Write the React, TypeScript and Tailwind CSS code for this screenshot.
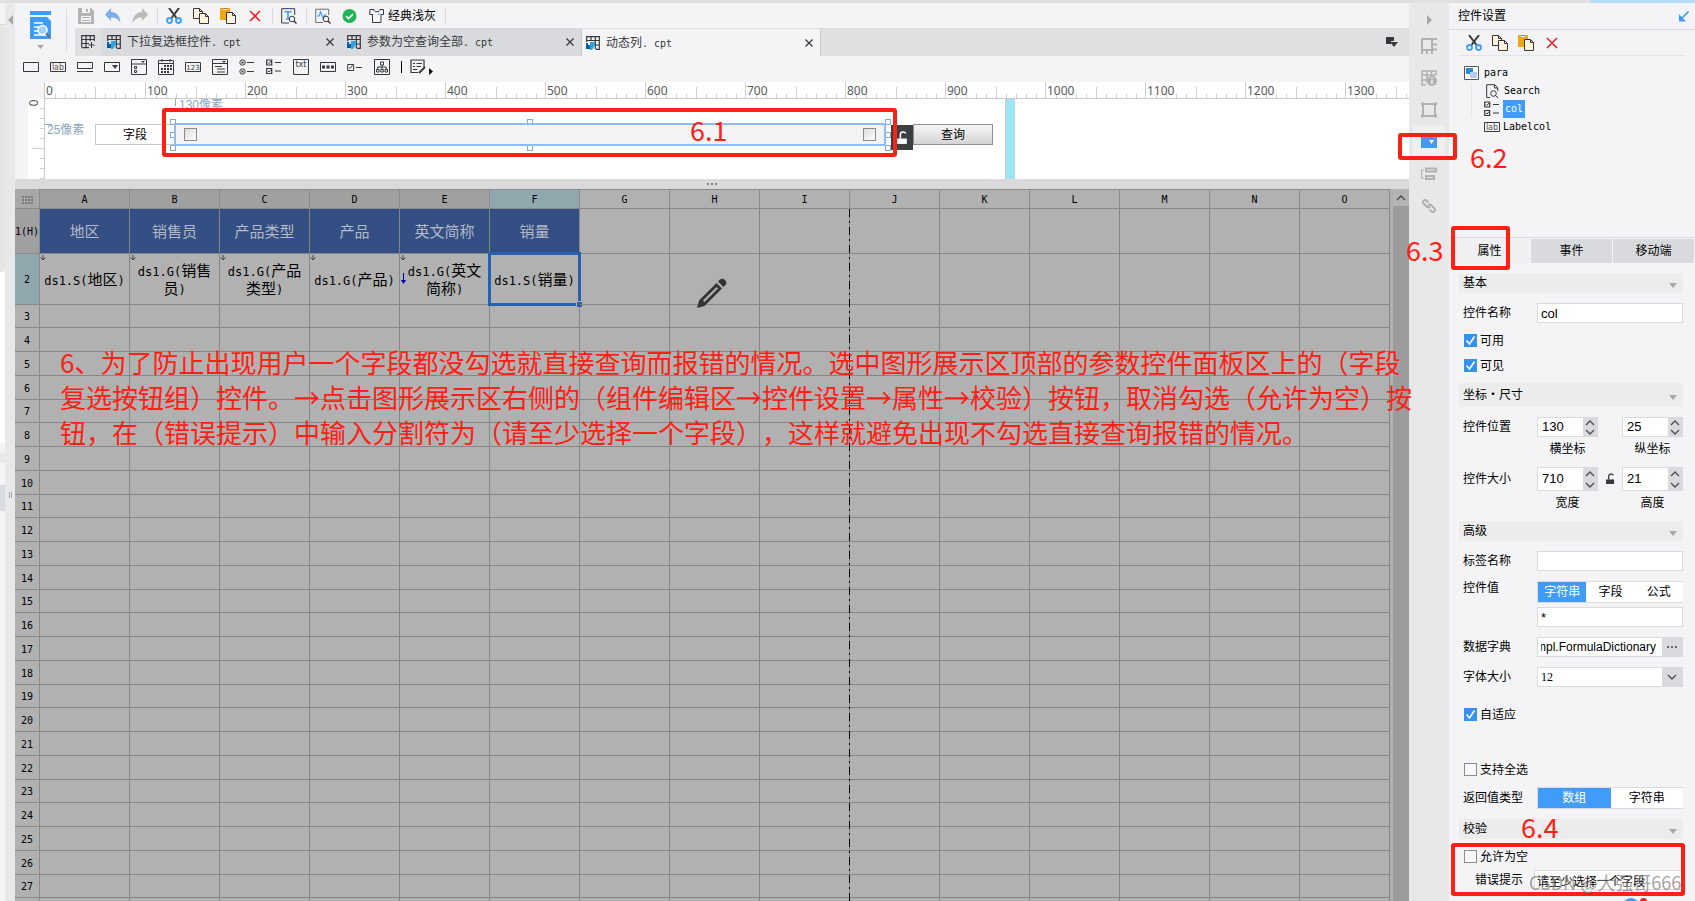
import { ReactNode, useState } from "react";
import { clsx } from "clsx";

type IconProps = {
  children: ReactNode;
  className?: string;
  box?: string;
};

const Icon = ({ children, className = "size-4", box = "0 0 16 16" }: IconProps) => (
  <svg viewBox={box} className={clsx("shrink-0", className)} fill="none" aria-hidden="true">
    {children}
  </svg>
);

const INK = "#36383b";

/* ---------- toolbar icons ---------- */

const SaveIcon = () => (
  <Icon>
    <path d="M0 0h13l3 3v13H0z" fill="#b3b4b6" />
    <path d="M4 0h8v5H4zM3 8h10v6H3z" fill="#f4f4f6" />
    <path d="M8 1h2v3H8zM4 9h8v1H4zM4 12h8v1H4z" fill="#b3b4b6" />
  </Icon>
);

const UndoIcon = () => (
  <Icon>
    <path d="M0 6.500 6 0v4c6 0 9 4 9.500 11C13 11 11 9.500 6 9.500V13z" fill="#79b0ea" />
  </Icon>
);

const RedoIcon = () => (
  <Icon>
    <path d="M16 6.500 10 0v4C4 4 1 8 .5 15 3 11 5 9.500 10 9.500V13z" fill="#b9babc" />
  </Icon>
);

const CutIcon = () => (
  <Icon>
    <path d="m3 0 7.500 10M13 0 5.500 10" stroke={INK} strokeWidth="2" />
    <circle cx="3.500" cy="12.500" r="2.500" stroke="#409cf8" strokeWidth="1.800" />
    <circle cx="12.500" cy="12.500" r="2.500" stroke="#409cf8" strokeWidth="1.800" />
  </Icon>
);

const CopyIcon = () => (
  <Icon>
    <path d="M.5.5h6l3 3v7h-9z" fill="#fff3dd" stroke={INK} />
    <path d="M6.500.5v3h3" stroke={INK} />
    <path d="M6.500 5.500h6l3 3v7h-9z" fill="#fff3dd" stroke={INK} />
    <path d="M12.500 5.500v3h3" stroke={INK} />
  </Icon>
);

const PasteIcon = () => (
  <Icon>
    <path d="M0 0h3v2h4V0h3v4H6v8H0z" fill="#f0a812" />
    <path d="M3 0h4" stroke="#9b4b2a" strokeWidth="1.500" />
    <path d="M6.500 4.500h6l3 3v8h-9z" fill="#fff3dd" stroke={INK} />
    <path d="M12.500 4.500v3h3" stroke={INK} />
  </Icon>
);

const DeleteIcon = () => (
  <Icon>
    <path d="m3 3 10 10M13 3 3 13" stroke="#e8222a" strokeWidth="1.600" />
  </Icon>
);

const FindTextIcon = () => (
  <Icon>
    <path d="M8 15H.7V.7h13V7" stroke={INK} />
    <path d="M3.500 3.800h7M7 3.800V11M5 11h4" stroke="#409cf8" strokeWidth="1.600" />
    <circle cx="11" cy="11" r="2.800" stroke={INK} />
    <path d="m13 13 2.500 2.500" stroke={INK} strokeWidth="1.500" />
  </Icon>
);

const FindWaveIcon = () => (
  <Icon>
    <path d="M8 14.500H.7V1.200h13V7" stroke="#6b6e72" />
    <path d="M2 8h2l1.500-4L8 10l1.500-3H12" stroke="#409cf8" strokeWidth="1.200" />
    <circle cx="11" cy="11" r="2.800" stroke={INK} />
    <path d="m13 13 2.500 2.500" stroke={INK} strokeWidth="1.500" />
  </Icon>
);

const OkIcon = () => (
  <Icon>
    <circle cx="7.500" cy="8" r="7" fill="#1fb455" />
    <path d="m4 8 2.500 2.500L11 6" stroke="#fff" strokeWidth="1.700" />
  </Icon>
);

const ShirtIcon = () => (
  <Icon>
    <path d="M5 1.500 1 1.500.7 6.500h2.800v8h8.500v-8h2.500L14.500 1.500H11c0 3-6 3-6 0z" stroke={INK} />
    <path d="M9 6h2" stroke="#409cf8" />
  </Icon>
);

/* ---------- widget icons ---------- */

const CheckRow = ({ y }: { y: number }) => (
  <>
    <path d={`M.7 ${y}h5v5h-5zM9 ${y + 2.5}h6`} stroke={INK} strokeWidth="1.200" />
    <path d={`m2 ${y + 2.5} 1 1 2-2.500`} stroke={INK} />
  </>
);

const CheckGroupIcon = () => (
  <Icon>
    <CheckRow y={1} />
    <CheckRow y={9.5} />
  </Icon>
);

const LabelIcon = () => (
  <Icon>
    <path d="M.5 3.500h15v9H.5z" stroke={INK} />
    <text x="8" y="11" textAnchor="middle" fontSize="8" fontFamily="DejaVu Sans" fill="#555">
      lab
    </text>
  </Icon>
);

const widgetIcons: { name: string; icon: ReactNode }[] = [
  { name: "文本", icon: <Icon><path d="M.5 3.500h15v9H.5z" stroke={INK} /></Icon> },
  { name: "标签", icon: <LabelIcon /> },
  {
    name: "按钮",
    icon: <Icon><path d="M.5 3.500h15v6H.5zM0 12.500h16" stroke={INK} /></Icon>,
  },
  {
    name: "下拉框",
    icon: (
      <Icon>
        <path d="M.5 3.500h15v9H.5z" stroke={INK} />
        <path d="M8 6h6l-3 4z" fill={INK} />
      </Icon>
    ),
  },
  {
    name: "下拉复选框",
    icon: (
      <Icon>
        <path d="M.5.5h15v15H.5zM.5 5h15M3.500 7.500h2v2h-2zM3.500 11.500h2v2h-2z" stroke={INK} />
        <path d="M10 2h4l-2 2z" fill={INK} />
      </Icon>
    ),
  },
  {
    name: "日期",
    icon: (
      <Icon>
        <path d="M.5 1.500h15v14H.5zM.5 4.500h15M4 0v3M12 0v3" stroke={INK} />
        <path d="M6 7h8M3 10h11M3 13h8" stroke={INK} strokeWidth="2" strokeDasharray="2 1" />
      </Icon>
    ),
  },
  {
    name: "数字",
    icon: (
      <Icon>
        <path d="M.5 3.500h15v9H.5z" stroke={INK} />
        <text x="8" y="11" textAnchor="middle" fontSize="7" fontFamily="DejaVu Sans" fill={INK}>
          123
        </text>
      </Icon>
    ),
  },
  {
    name: "下拉树",
    icon: (
      <Icon>
        <path d="M.5.5h15v15H.5zM.5 4.500h15M3 7.500h7M5 10h8M5 13h8" stroke={INK} />
        <path d="M10 2h4l-2 2z" fill={INK} />
      </Icon>
    ),
  },
  {
    name: "单选按钮组",
    icon: (
      <Icon>
        <circle cx="3.500" cy="3.500" r="2.700" stroke={INK} />
        <circle cx="3.500" cy="12.500" r="2.700" stroke={INK} />
        <path d="M2.500 3.500h2M2.500 12.500h2" stroke={INK} strokeWidth="2" />
        <path d="M8 3.500h7M8 12.500h7" stroke={INK} />
      </Icon>
    ),
  },
  { name: "复选按钮组", icon: <CheckGroupIcon /> },
  {
    name: "文本域",
    icon: (
      <Icon>
        <path d="M.5.5h15v15H.5z" stroke={INK} />
        <text x="8" y="8" textAnchor="middle" fontSize="8" fontFamily="DejaVu Sans" fill={INK}>
          txt
        </text>
      </Icon>
    ),
  },
  {
    name: "密码",
    icon: (
      <Icon>
        <path d="M.5 3.500h15v9H.5z" stroke={INK} />
        <path d="M2 8h12" stroke={INK} strokeWidth="3" strokeDasharray="3 1.500" />
      </Icon>
    ),
  },
  {
    name: "复选框",
    icon: (
      <Icon>
        <path d="M.7 5.500h6v6h-6zM9 8.500h6" stroke={INK} />
        <path d="m2 8.500 1 1 2.500-3" stroke={INK} />
      </Icon>
    ),
  },
  {
    name: "树",
    icon: (
      <Icon>
        <path
          d="M.5.5h15v15H.5zM6.500 3h3v3h-3zM2.500 10.500h2.500v2.500H2.500zM6.800 10.500h2.500v2.500H6.800zM11 10.500h2.500v2.500H11zM8 6v4M3.700 10V8h8.500v2"
          stroke={INK}
        />
      </Icon>
    ),
  },
];

const TabFileIcon = () => (
  <Icon className="size-[14px]" box="0 0 14 14">
    <path d="M.7 6V.7h12.600v12.600H10M.7 4.500h12.600M5 .7v4M9.300.7v12.600M9.300 9h4" stroke={INK} strokeWidth="1.200" />
    <path d="M0 7h2v2h2v4H0z" fill="#0b5ba5" />
    <path d="M4 6h5v3l-3 5H4z" fill="#2fa3dd" />
  </Icon>
);

const LockIcon = ({ className, color }: { className: string; color: string }) => (
  <Icon className={className} box="0 0 10 13">
    <path d="M3 7V3.500C3 .3 7.500.3 8 2.500" stroke={color} strokeWidth="1.400" />
    <path d="M0 7h9v5H0z" fill={color} />
  </Icon>
);

const Chevron = ({ up }: { up?: boolean }) => (
  <Icon className="h-[6px] w-[10px]" box="0 0 10 6">
    <path d={up ? "m1 5 4-4 4 4" : "m1 1 4 4 4-4"} stroke="#4b4d50" strokeWidth="1.300" />
  </Icon>
);

const ToolButton = ({ label, children }: { label: string; children: ReactNode }) => (
  <button type="button" aria-label={label} className="flex size-4 shrink-0 items-center justify-center">
    {children}
  </button>
);

const Divider = () => <span className="mr-2 ml-[9px] h-4 w-px bg-[#d9dadd]" />;

/* ---------- header ---------- */

const TopToolbar = () => (
  <div className="flex h-[25px] items-center pl-[3px]">
    <div className="flex gap-[11px]">
      <ToolButton label="保存"><SaveIcon /></ToolButton>
      <ToolButton label="撤销"><UndoIcon /></ToolButton>
      <ToolButton label="重做"><RedoIcon /></ToolButton>
    </div>
    <Divider />
    <div className="flex gap-[11px]">
      <ToolButton label="剪切"><CutIcon /></ToolButton>
      <ToolButton label="复制"><CopyIcon /></ToolButton>
      <ToolButton label="粘贴"><PasteIcon /></ToolButton>
      <ToolButton label="删除"><DeleteIcon /></ToolButton>
    </div>
    <Divider />
    <ToolButton label="查找"><FindTextIcon /></ToolButton>
    <Divider />
    <div className="flex gap-[11px]">
      <ToolButton label="检测"><FindWaveIcon /></ToolButton>
      <ToolButton label="校验"><OkIcon /></ToolButton>
      <button type="button" className="flex items-center gap-[3px] whitespace-nowrap">
        <ShirtIcon />
        经典浅灰
      </button>
    </div>
    <Divider />
  </div>
);

const files = ["下拉复选框控件", "参数为空查询全部", "动态列"];

const FileTabs = () => {
  const [active, setActive] = useState(2);

  return (
    <div className="flex h-7 bg-[#e0e0e2]">
      <button type="button" aria-label="新建" className="flex w-[26px] items-center justify-center">
        <Icon className="size-[14px]" box="0 0 14 14">
          <path d="M.7 12V.7h12.600V6M.7 4.500h12.600M5 .7v12.600M9.300.7V6M.7 8.500H8M.7 12.600H8" stroke={INK} strokeWidth="1.200" />
          <path d="M7.500 10h6M10.500 7v6" stroke={INK} />
        </Icon>
      </button>
      {files.map((file, index) => (
        <div
          key={file}
          className={clsx(
            "flex w-[240px] items-center pr-[7px]",
            index === active
              ? "border-x border-t border-[#c9cacd] border-t-[#dcdcde] bg-[#f4f4f6] pl-1"
              : "bg-[#d9dade] pl-[6px]"
          )}
        >
          <button
            type="button"
            onClick={() => setActive(index)}
            className="flex flex-1 items-center gap-[6px] whitespace-nowrap text-[#36383b]"
          >
            <TabFileIcon />
            <span>
              {file}
              <span className="font-['DejaVu_Sans_Mono',monospace] text-[10px]">. cpt</span>
            </span>
          </button>
          <button type="button" aria-label="关闭">
            <Icon className="size-2" box="0 0 8 8">
              <path d="m.5.5 7 7M7.500.5l-7 7" stroke={INK} strokeWidth="1.300" />
            </Icon>
          </button>
        </div>
      ))}
      <button type="button" aria-label="更多" className="mr-[11px] ml-auto">
        <Icon className="h-[11px] w-3" box="0 0 12 11">
          <path d="M0 0h8v4H5v3H0z" fill={INK} />
          <path d="M4 5h8l-4 5z" fill={INK} />
        </Icon>
      </button>
    </div>
  );
};

const WidgetBar = () => (
  <div className="flex h-[26px] items-center gap-[11px] pb-[5px] pl-2">
    {widgetIcons.map(({ name, icon }) => (
      <ToolButton key={name} label={name}>{icon}</ToolButton>
    ))}
    <div className="flex items-center gap-2">
      <span className="h-3 w-px bg-black" />
      <button type="button" aria-label="更多控件" className="flex items-end gap-[3px]">
        <Icon>
          <path d="M8 13.500H1V1h13v7M3 4.500h2M6.500 4.500H12M3 7.500h2M6.500 7.500H11M3 10.500h4" stroke={INK} strokeWidth="1.200" />
          <path d="m9 14 6-6" stroke={INK} strokeWidth="2" />
        </Icon>
        <Icon className="h-[7px] w-1" box="0 0 4 7">
          <path d="m0 0 4 3.500L0 7z" fill="#111" />
        </Icon>
      </button>
    </div>
  </div>
);

/* ---------- parameter pane ---------- */

const Ruler = () => (
  <div className="ml-[29px] flex h-[17px] overflow-hidden border-b border-[#c8c9cc] border-l bg-white">
    {Array.from({ length: 14 }, (_, seg) => (
      <div
        key={seg}
        className={clsx("relative flex w-[100px] shrink-0 items-end", seg > 0 && "border-l border-[#cfd0d3]")}
      >
        <span className="absolute top-px left-px font-['Noto_Sans',sans-serif] text-xs leading-[15px] text-[#58595b]">
          {seg * 100}
        </span>
        {Array.from({ length: 10 }, (_, i) => (
          <span
            key={i}
            className={clsx(
              "w-[10px] shrink-0 border-[#cfd0d3]",
              i > 0 && "border-l",
              i === 5 ? "h-[11px]" : "h-1"
            )}
          />
        ))}
      </div>
    ))}
  </div>
);

const handles = [
  "left-[125px] top-5",
  "left-[125px] top-[33px]",
  "left-[125px] top-[46px]",
  "left-[482px] top-5",
  "left-[482px] top-[46px]",
  "left-[840px] top-5",
  "left-[840px] top-[33px]",
  "left-[840px] top-[46px]",
];

const ParamPane = () => (
  <div className="flex h-20 pl-[13px]">
    <div className="relative flex w-[17px] flex-col items-end overflow-hidden border-r border-[#c8c9cc] bg-white">
      <span className="absolute top-0 left-[2px] rotate-90 font-['Noto_Sans',sans-serif] leading-2 text-[#58595b]">
        0
      </span>
      {Array.from({ length: 8 }, (_, i) => (
        <span
          key={i}
          className={clsx("h-[10px] shrink-0 border-b border-[#cfd0d3]", i === 4 ? "w-3" : "w-1")}
        />
      ))}
    </div>
    <div className="relative flex-1 overflow-hidden bg-white">
      <span className="absolute top-0 left-[130px] h-[7px] w-px bg-[#8aa6c0]" />
      <span className="absolute top-0 left-[134px] leading-3 text-[#8aa6c0]">130像素</span>
      <span className="absolute top-[25px] left-0 w-[7px] border-t border-[#8aa6c0]" />
      <span className="absolute top-6 left-[2px] leading-[14px] text-[#8aa6c0]">25像素</span>

      <div className="absolute top-[25px] left-[50px] flex h-[21px] w-20 items-center justify-center border border-[#c8c9cc]">
        字段
      </div>
      {handles.map((pos) => (
        <span key={pos} className={clsx("absolute size-[6px] border border-[#8aa6c0] bg-white", pos)} />
      ))}
      <div className="absolute top-6 left-[129px] flex h-[23px] w-[712px] items-center justify-between border-2 border-[#89bef8] bg-[#f4f4f6] px-2">
        <input
          type="checkbox"
          aria-label="选项一"
          className="size-[13px] appearance-none border border-[#8c8c8c] bg-linear-to-br from-[#dcdcdc] to-white"
        />
        <input
          type="checkbox"
          aria-label="选项二"
          className="size-[13px] appearance-none border border-[#8c8c8c] bg-linear-to-br from-[#dcdcdc] to-white"
        />
      </div>
      <div className="absolute top-[26px] left-[846px] flex h-[25px] w-[22px] items-center justify-center bg-[#3b3f42]">
        <LockIcon className="h-[14px] w-[11px]" color="#fff" />
      </div>
      <button
        type="button"
        className="absolute top-[25px] left-[868px] h-[21px] w-20 border border-[#8f8f8f] bg-linear-to-b from-[#f6f6f6] to-[#d4d4d4] leading-[18px]"
      >
        查询
      </button>
      <div className="absolute inset-y-0 left-[960px] w-[10px] border-l border-[#c8c9cc] bg-[#9be5f4]" />
    </div>
  </div>
);

/* ---------- sheet ---------- */

const letters = "ABCDEFGHIJKLMNO".split("");
const titles = ["地区", "销售员", "产品类型", "产品", "英文简称", "销量"];
const bindings = [
  [["ds1.S(", "地区", ")"]],
  [["ds1.G(", "销售", ""], ["", "员", ")"]],
  [["ds1.G(", "产品", ""], ["", "类型", ")"]],
  [["ds1.G(", "产品", ")"]],
  [["ds1.G(", "英文", ""], ["", "简称", ")"]],
  [["ds1.S(", "销量", ")"]],
];

const headFill = (selected: boolean, used: boolean) =>
  selected ? "bg-[#90a7ae]" : used ? "bg-[#a0a0a0]" : "bg-[#b1b1b1]";

const Sheet = () => (
  <div className="relative flex min-h-0 flex-1 items-start overflow-hidden bg-[#b1b1b1]">
    <table className="w-[1375px] table-fixed border-separate border-spacing-0 [&_td]:border-r [&_td]:border-b [&_td]:border-[#868686] [&_td]:px-0 [&_td]:pb-0 [&_th]:border-r [&_th]:border-b [&_th]:border-[#8a8a8a] [&_th]:px-0 [&_th]:pt-[2px] [&_th]:pb-0 [&_th]:font-normal">
      <colgroup>
        <col className="w-[25px]" />
        {letters.map((letter) => (
          <col key={letter} className="w-[90px]" />
        ))}
      </colgroup>
      <thead className="font-['DejaVu_Sans_Mono',monospace] text-[10px]">
        <tr className="h-5">
          <th className="bg-[#a8a8a8]">
            <Icon className="mx-auto h-2 w-[11px]" box="0 0 11 8">
              <path d="M0 1h11M0 4h11M0 7h11" stroke="#777" strokeWidth="2" strokeDasharray="2 1" />
            </Icon>
          </th>
          {letters.map((letter, i) => (
            <th key={letter} scope="col" className={clsx("border-t leading-4", headFill(i === 5, i < 5))}>
              {letter}
            </th>
          ))}
        </tr>
      </thead>
      <tbody>
        <tr className="h-[45px]">
          <th scope="row" className="bg-[#a0a0a0] font-['DejaVu_Sans_Mono',monospace] text-[10px] whitespace-nowrap">
            1(H)
          </th>
          {letters.map((letter, i) => (
            <td
              key={letter}
              className={clsx("pt-[2px] text-center text-[15px] leading-5", i < 6 && "bg-[#334f84] text-[#b4bac6]")}
            >
              {titles[i]}
            </td>
          ))}
        </tr>
        <tr className="h-[51px]">
          <th scope="row" className="bg-[#90a7ae] font-['DejaVu_Sans_Mono',monospace] text-[10px]">
            2
          </th>
          {letters.map((letter, i) => (
            <td key={letter} className="relative pt-px text-center text-[15px] leading-[18px] whitespace-nowrap">
              {bindings[i]?.map(([before, name, after]) => (
                <div key={name}>
                  <span className="font-['DejaVu_Sans_Mono',monospace] text-xs">{before}</span>
                  {name}
                  <span className="font-['DejaVu_Sans_Mono',monospace] text-xs">{after}</span>
                </div>
              ))}
              {i < 5 && (
                <Icon className="absolute top-px left-0 size-[6px]" box="0 0 6 6">
                  <path d="M3 0v5M.5 2.500 3 5l2.500-2.500" stroke="#444" />
                </Icon>
              )}
              {i === 4 && (
                <Icon className="absolute top-[19px] left-px h-3 w-[5px]" box="0 0 5 12">
                  <path d="M2.500 0v9" stroke="#0000b4" />
                  <path d="M0 7h5l-2.500 4z" fill="#0000b4" />
                </Icon>
              )}
              {i === 5 && (
                <>
                  <span className="absolute -inset-[2px] border-[3px] border-[#2561ac]" />
                  <span className="absolute -right-[3px] -bottom-[3px] size-[6px] border-t border-l border-[#b1b1b1] bg-[#2561ac]" />
                </>
              )}
            </td>
          ))}
        </tr>
        {Array.from({ length: 25 }, (_, i) => i + 3).map((row) => (
          <tr key={row} className={row % 4 === 3 ? "h-[23px]" : "h-6"}>
            <th scope="row" className="font-['DejaVu_Sans_Mono',monospace] text-[10px] leading-4">
              {row}
            </th>
            {letters.map((letter) => (
              <td key={letter} />
            ))}
          </tr>
        ))}
        <tr className="h-6">
          <th />
          {letters.map((letter) => (
            <td key={letter} />
          ))}
        </tr>
      </tbody>
    </table>

    <div className="ml-auto flex w-4 flex-col self-stretch bg-[#9c9c9c]">
      <button type="button" aria-label="向上滚动" className="flex h-[17px] items-center justify-center bg-[#b4b4b4]">
        <Chevron up />
      </button>
    </div>

    {/* page break */}
    <svg className="absolute top-5 left-[834px] h-full w-px" aria-hidden="true">
      <line x1="0.500" y1="0" x2="0.500" y2="900" stroke="#000" strokeDasharray="8 4 2 4" />
    </svg>
    <Icon className="absolute top-[89px] left-[682px] size-[30px]" box="0 0 30 30">
      <path d="M21 3.500 23 1.500c3-3 8.500 2.500 5.500 5.500l-2 2z" fill="#333436" />
      <path d="m19.500 5 5.500 5.500L7.500 28 0 30l2-7.500zM19.500 9 6 22.500l1.500 1.500L21 10.500z" fill="#333436" fillRule="evenodd" />
    </Icon>
  </div>
);

/* ---------- right side ---------- */

const GRAY = "#b0b1b3";

const sideIcons: { name: string; icon: ReactNode }[] = [
  {
    name: "单元格元素",
    icon: (
      <Icon>
        <path d="M1 16V1h15M11 1v11H1M11 6.500h5M11 11.500h5M6 12v4M11 12v4" stroke={GRAY} strokeWidth="2" />
      </Icon>
    ),
  },
  {
    name: "单元格属性",
    icon: (
      <Icon>
        <path d="M5 15H1V1h14v4M1 5h14M6 1v12M1 10h5M10.500 1v4" stroke={GRAY} strokeWidth="1.500" />
        <circle cx="11" cy="11" r="5" fill={GRAY} />
        <path d="M11 10v4M11 7.500v1.500" stroke="#e8e8e8" strokeWidth="1.800" />
      </Icon>
    ),
  },
  {
    name: "悬浮元素",
    icon: (
      <Icon>
        <path d="M2 2h12v12H2z" stroke={GRAY} strokeWidth="2" />
        <path d="M0 .5h3v3H0zM13 .5h3v3h-3zM0 12.500h3v3H0zM13 12.500h3v3h-3z" fill={GRAY} />
      </Icon>
    ),
  },
  {
    name: "控件设置",
    icon: (
      <Icon>
        <path d="M0 2h16v12H0z" fill="#409cf8" />
        <path d="M8 6h5l-2.500 4z" fill="#fff" />
      </Icon>
    ),
  },
  {
    name: "条件属性",
    icon: (
      <Icon>
        <path d="M3 4H.5v8H3" stroke={GRAY} />
        <path d="M5 2.500h10v3H5zM5 10h8v3H5z" stroke={GRAY} strokeWidth="2" />
      </Icon>
    ),
  },
  {
    name: "超级链接",
    icon: (
      <Icon>
        <path
          d="M7.500 4.500 6 3C3.500.5.500 3.500 3 6l2.500 2.500c1 1 2.500 1 3.500 0M8.500 11.500l1.500 1.500c2.500 2.500 5.500-.5 3-3l-2.500-2.500c-1-1-2.500-1-3.500 0"
          stroke={GRAY}
          strokeWidth="2"
        />
      </Icon>
    ),
  },
];

const SideStrip = () => (
  <nav className="flex w-10 shrink-0 flex-col bg-[#e8e8e8] px-1 text-center">
    <button type="button" aria-label="收起" className="flex h-[27px] items-end justify-center pb-[5px]">
      <Icon className="h-[10px] w-[5px]" box="0 0 5 10">
        <path d="m0 0 5 5-5 5z" fill="#a5a6a8" />
      </Icon>
    </button>
    {sideIcons.map(({ name, icon }, i) => (
      <button
        key={name}
        type="button"
        aria-label={name}
        className={clsx("flex h-8 items-center justify-center", i === 3 && "bg-[#f0f0f2]")}
      >
        {icon}
      </button>
    ))}
  </nav>
);

const Section = ({ title, tall }: { title: string; tall?: boolean }) => (
  <button
    type="button"
    className={clsx("flex items-center justify-between bg-[#ececec] pr-[6px] pl-1", tall ? "h-6" : "h-5")}
  >
    {title}
    <Icon className="mt-1 h-[5px] w-2" box="0 0 8 5">
      <path d="M0 0h8L4 5z" fill="#a8a9ab" />
    </Icon>
  </button>
);

const CheckField = ({ label, checked = false }: { label: string; checked?: boolean }) => {
  const [on, setOn] = useState(checked);

  return (
    <label className="flex h-[15px] items-center gap-[3px] pl-[5px]">
      <span className="grid">
        <input
          type="checkbox"
          checked={on}
          onChange={() => setOn(!on)}
          className="col-start-1 row-start-1 size-[13px] appearance-none border border-[#8c8d90] bg-[#f8f8fa] checked:border-[#3492ee] checked:bg-[#3492ee]"
        />
        {on && (
          <Icon className="pointer-events-none col-start-1 row-start-1 size-[13px]" box="0 0 13 13">
            <path d="m2.500 6.500 3 3.500 5-7.500" stroke="#fff" strokeWidth="1.600" />
          </Icon>
        )}
      </span>
      {label}
    </label>
  );
};

type SpinnerProps = {
  id: string;
  value: string;
  tall?: boolean;
  label: string;
};

const Spinner = ({ id, value, tall, label }: SpinnerProps) => (
  <div className="flex w-[61px] flex-col gap-[5px]">
    <div className={clsx("flex border border-[#d9dadd]", tall ? "h-6" : "h-5")}>
      <input id={id} defaultValue={value} className="w-full min-w-0 bg-white pl-1 text-[13px]" />
      <span className="flex w-[14px] shrink-0 flex-col items-center justify-around bg-[#d9dadd]">
        <button type="button" aria-label={`${label}增加`}><Chevron up /></button>
        <button type="button" aria-label={`${label}减少`}><Chevron /></button>
      </span>
    </div>
    <label htmlFor={id} className="h-[15px] text-center leading-[15px]">
      {label}
    </label>
  </div>
);

const field = "h-5 w-full min-w-0 border border-[#d9dadd] bg-white px-[3px] text-[13px]";
const name = "w-[78px] shrink-0 pl-1";

type SegmentsProps = {
  label: string;
  options: string[];
};

const Segments = ({ label, options }: SegmentsProps) => {
  const [picked, setPicked] = useState(0);

  return (
    <div role="group" aria-label={label} className="flex h-[22px] w-full shrink border border-r-0 border-[#d9dadd] bg-white">
      {options.map((option, i) => (
        <button
          key={option}
          type="button"
          onClick={() => setPicked(i)}
          className={clsx("flex-1", i === picked && "bg-[#409cf8] text-white")}
        >
          {option}
        </button>
      ))}
    </div>
  );
};

const WidgetTree = () => (
  <ul className="flex flex-col pt-2 pl-[5px] font-['DejaVu_Sans_Mono',monospace] text-[10px]">
    <li className="flex h-[18px] items-center gap-[5px]">
      <Icon className="h-[14px] w-[15px]" box="0 0 15 14">
        <path d="M.5.5h14v13H.5z" fill="#fff" stroke="#55575a" />
        <path d="M2 2h7v6H2z" fill="#2f8bd0" />
        <path d="M6 6h7v6H6z" fill="#b5cdf2" />
      </Icon>
      para
    </li>
    <li className="ml-[7px] flex h-[18px] items-center border-l border-[#e6e6e8] pl-[14px]">
      <Icon className="mr-[3px] h-[15px] w-[15px]" box="0 0 15 15">
        <path d="M4 13.500H.7V.7h8l3 3V7M8.500.7V4h3" stroke={INK} />
        <circle cx="7.500" cy="9.500" r="2.800" stroke={INK} />
        <path d="m9.500 11.500 2.500 2.500" stroke={INK} />
      </Icon>
      Search
    </li>
    <li className="ml-[7px] flex h-[18px] items-center border-l border-[#e6e6e8] pl-3">
      <CheckGroupIcon />
      <span className="ml-[3px] bg-[#409cf8] px-[2px] leading-[18px] text-white">col</span>
    </li>
    <li className="ml-[7px] flex h-[18px] items-center pl-[13px]">
      <LabelIcon />
      <span className="ml-[3px]">Labelcol</span>
    </li>
  </ul>
);

const panelTabs = ["属性", "事件", "移动端"];

const SettingsPanel = () => {
  const [tab, setTab] = useState(0);

  return (
    <aside className="flex w-[246px] shrink-0 flex-col bg-[#f4f4f6]">
      <header className="flex h-[27px] items-center justify-between border-b border-[#d9dadd] pr-[6px] pl-[9px]">
        控件设置
        <Icon className="size-[11px]" box="0 0 11 11">
          <path d="m10.500.5-8 8" stroke="#409cf8" strokeWidth="1.600" />
          <path d="M1 3v7.500h7z" fill="#409cf8" />
        </Icon>
      </header>
      <div className="mx-[10px] flex h-[207px] flex-col">
        <div className="flex h-[26px] items-center gap-[10px] border-b border-[#e3e3e5] pl-[7px]">
          <ToolButton label="剪切控件"><CutIcon /></ToolButton>
          <ToolButton label="复制控件"><CopyIcon /></ToolButton>
          <ToolButton label="粘贴控件"><PasteIcon /></ToolButton>
          <ToolButton label="删除控件"><DeleteIcon /></ToolButton>
        </div>
        <WidgetTree />
      </div>
      <div className="grid h-[26px] grid-cols-3 gap-px border-t border-[#d9dadd] pt-px pr-px">
        {panelTabs.map((title, i) => (
          <button
            key={title}
            type="button"
            onClick={() => setTab(i)}
            className={clsx("h-6", i === tab ? "bg-[#f0f0f2]" : "bg-[#d9dade]")}
          >
            {title}
          </button>
        ))}
      </div>

      <form className="flex flex-col gap-[10px] pt-[10px] pr-3 pl-[10px]">
        <Section title="基本" />
        <div className="flex items-center">
          <label htmlFor="widget-name" className={name}>控件名称</label>
          <input id="widget-name" defaultValue="col" className={field} />
        </div>
        <CheckField label="可用" checked />
        <CheckField label="可见" checked />

        <Section title="坐标・尺寸" tall />
        <div className="flex justify-between">
          <span className={clsx(name, "leading-5")}>控件位置</span>
          <Spinner id="pos-x" value="130" label="横坐标" />
          <span className="flex-1" />
          <Spinner id="pos-y" value="25" label="纵坐标" />
        </div>
        <div className="flex">
          <span className={clsx(name, "leading-6")}>控件大小</span>
          <Spinner id="size-w" value="710" tall label="宽度" />
          <button type="button" aria-label="锁定比例" className="flex h-6 flex-1 items-center justify-center">
            <LockIcon className="h-3 w-[9px]" color={INK} />
          </button>
          <Spinner id="size-h" value="21" tall label="高度" />
        </div>

        <Section title="高级" />
        <div className="flex items-center">
          <label htmlFor="tag-name" className={name}>标签名称</label>
          <input id="tag-name" className={field} />
        </div>
        <div className="flex">
          <label htmlFor="widget-value" className={clsx(name, "leading-[14px]")}>控件值</label>
          <div className="flex flex-1 flex-col gap-1">
            <Segments label="控件值类型" options={["字符串", "字段", "公式"]} />
            <input id="widget-value" defaultValue="*" className={field} />
          </div>
        </div>
        <div className="flex items-center">
          <label htmlFor="dictionary" className={name}>数据字典</label>
          <div className="flex h-5 min-w-0 flex-1 border border-[#d9dadd] bg-white pl-[3px]">
            <input id="dictionary" defaultValue="mpl.FormulaDictionary" className="w-full min-w-0 -indent-[5px] text-xs" />
            <button type="button" aria-label="选择字典" className="flex w-5 shrink-0 items-center justify-center bg-[#d9dadd]">
              <Icon className="h-[2px] w-[10px]" box="0 0 10 2">
                <path d="M0 1h10" stroke="#66686b" strokeWidth="2" strokeDasharray="2 2" />
              </Icon>
            </button>
          </div>
        </div>
        <div className="flex items-center">
          <label htmlFor="font-size" className={name}>字体大小</label>
          <div className="grid h-5 flex-1 border border-[#d9dadd] bg-white">
            <select
              id="font-size"
              className="col-start-1 row-start-1 appearance-none bg-transparent pl-[3px] font-['Liberation_Serif',serif] text-xs leading-4"
            >
              <option>12</option>
              <option>14</option>
            </select>
            <span className="pointer-events-none col-start-1 row-start-1 flex w-5 items-center justify-center justify-self-end bg-[#d9dadd]">
              <Chevron />
            </span>
          </div>
        </div>

        <div className="mt-[10px] mb-[30px]">
          <CheckField label="自适应" checked />
        </div>
        <CheckField label="支持全选" />
        <div className="flex items-center">
          <span className={name}>返回值类型</span>
          <Segments label="返回值类型" options={["数组", "字符串"]} />
        </div>

        <Section title="校验" />
        <CheckField label="允许为空" />
        <div className="-mt-1 flex items-center">
          <label htmlFor="error-tip" className="w-[75px] shrink-0 pl-4">错误提示</label>
          <input
            id="error-tip"
            defaultValue="请至少选择一个字段"
            className="h-5 w-full min-w-0 border border-[#d9dadd] bg-white px-[2px]"
          />
        </div>
      </form>
    </aside>
  );
};

/* ---------- annotations ---------- */

const frames = [
  "top-[108px] left-[162px] h-[49px] w-[735px]",
  "top-[133px] left-[1398px] h-[27px] w-[59px]",
  "top-[226px] left-[1451px] h-11 w-[59px]",
  "top-[843px] left-[1451px] h-[53px] w-[234px]",
];

const marks = [
  { text: "6.1", pos: "top-[114px] left-[690px]" },
  { text: "6.2", pos: "top-[141px] left-[1470px]" },
  { text: "6.3", pos: "top-[234px] left-[1406px]" },
  { text: "6.4", pos: "top-[811px] left-[1521px]" },
];

const Annotations = () => (
  <div className="pointer-events-none absolute inset-0 font-['Noto_Sans_CJK_SC',sans-serif] text-[#ff2014]">
    {frames.map((pos) => (
      <span key={pos} className={clsx("absolute rounded-[3px] border-4 border-[#ff2014]", pos)} />
    ))}
    {marks.map(({ text, pos }) => (
      <span key={text} className={clsx("absolute text-[27px] leading-8", pos)}>
        {text}
      </span>
    ))}
    <p className="absolute top-[344px] left-[60px] text-[26px] leading-[35px] whitespace-nowrap [text-spacing-trim:space-all]">
      6、为了防止出现用户一个字段都没勾选就直接查询而报错的情况。选中图形展示区顶部的参数控件面板区上的（字段
      <br />
      复选按钮组）控件。→点击图形展示区右侧的（组件编辑区→控件设置→属性→校验）按钮，取消勾选（允许为空）按
      <br />
      钮，在（错误提示）中输入分割符为（请至少选择一个字段），这样就避免出现不勾选直接查询报错的情况。
    </p>
    <span className="absolute top-[870px] left-[1529px] text-[18px] leading-6 whitespace-nowrap text-[#777]/70">
      CSDN @大强哥666
    </span>
    <span className="absolute top-[898px] left-[1622px] h-[10px] w-[18px] rounded-t-full bg-[#409cf8]" />
    <span className="absolute top-[898px] left-[1640px] size-[7px] rounded-full bg-[#e8222a]" />
  </div>
);

const App = () => (
  <div className="relative flex h-screen flex-col overflow-hidden bg-[#f4f4f6] font-['Liberation_Sans','Noto_Sans_CJK_SC',sans-serif] text-xs text-black">
    <div className="flex h-[3px] shrink-0 justify-end bg-[#e0e0e2]">
      <span className="w-[104px] bg-[#b5daf2]" />
    </div>
    <div className="flex min-h-0 flex-1">
      <div className="flex w-[5px] shrink-0 flex-col">
        <span className="h-[22px] border-b border-[#d9dadd]" />
        <span className="h-[247px] rounded-r-sm bg-[#e6e6e8]" />
        <span className="h-[171px] bg-white" />
        <span className="h-[10px]" />
        <span className="h-[10px] bg-[#e8e8e8]" />
        <span className="h-[22px]" />
        <span className="h-[26px] bg-[#d9dadd]" />
      </div>
      <div className="flex w-[10px] shrink-0 flex-col items-center bg-[#e8e8e8]">
        <Icon className="mt-3 h-[10px] w-[5px]" box="0 0 5 10">
          <path d="M5 0 0 5l5 5z" fill="#a5a6a8" />
        </Icon>
        <span className="mt-[467px] h-[6px] w-[3px] border-x border-[#a5a6a8]" />
      </div>

      <main className="flex min-w-0 flex-1 flex-col">
        <div className="flex">
          <div className="flex w-[60px] shrink-0 items-center justify-between">
            <button type="button" aria-label="模板" className="ml-[15px] flex flex-col items-center gap-[6px]">
              <Icon className="h-7 w-[21px]" box="0 0 21 28">
                <path d="M0 0h21v4H0zM0 6h17l4 4v18H0z" fill="#409cf8" />
                <path d="M4 12h9M4 16h5M4 20h4M4 24h14" stroke="#fff" strokeWidth="1.500" />
                <circle cx="12.500" cy="19" r="4.500" fill="#a5d0f8" stroke="#fff" strokeWidth="1.500" />
                <path d="m16 22.500 3.500 3.500" stroke="#6a6d70" strokeWidth="2" />
              </Icon>
              <Icon className="h-1 w-[7px]" box="0 0 7 4">
                <path d="M0 0h7L3.500 4z" fill="#a8a9ab" />
              </Icon>
            </button>
            <span className="mr-2 h-[42px] w-px bg-[#d9dadd]" />
          </div>
          <div className="min-w-0 flex-1">
            <TopToolbar />
            <FileTabs />
          </div>
        </div>
        <WidgetBar />
        <Ruler />
        <ParamPane />
        <div className="flex h-[10px] shrink-0 items-center justify-center bg-[#dadadc]">
          <Icon className="h-[2px] w-[10px]" box="0 0 10 2">
            <path d="M0 1h10" stroke="#808184" strokeWidth="2" strokeDasharray="2 2" />
          </Icon>
        </div>
        <Sheet />
      </main>

      <SideStrip />
      <SettingsPanel />
    </div>
    <Annotations />
  </div>
);

export default App;
